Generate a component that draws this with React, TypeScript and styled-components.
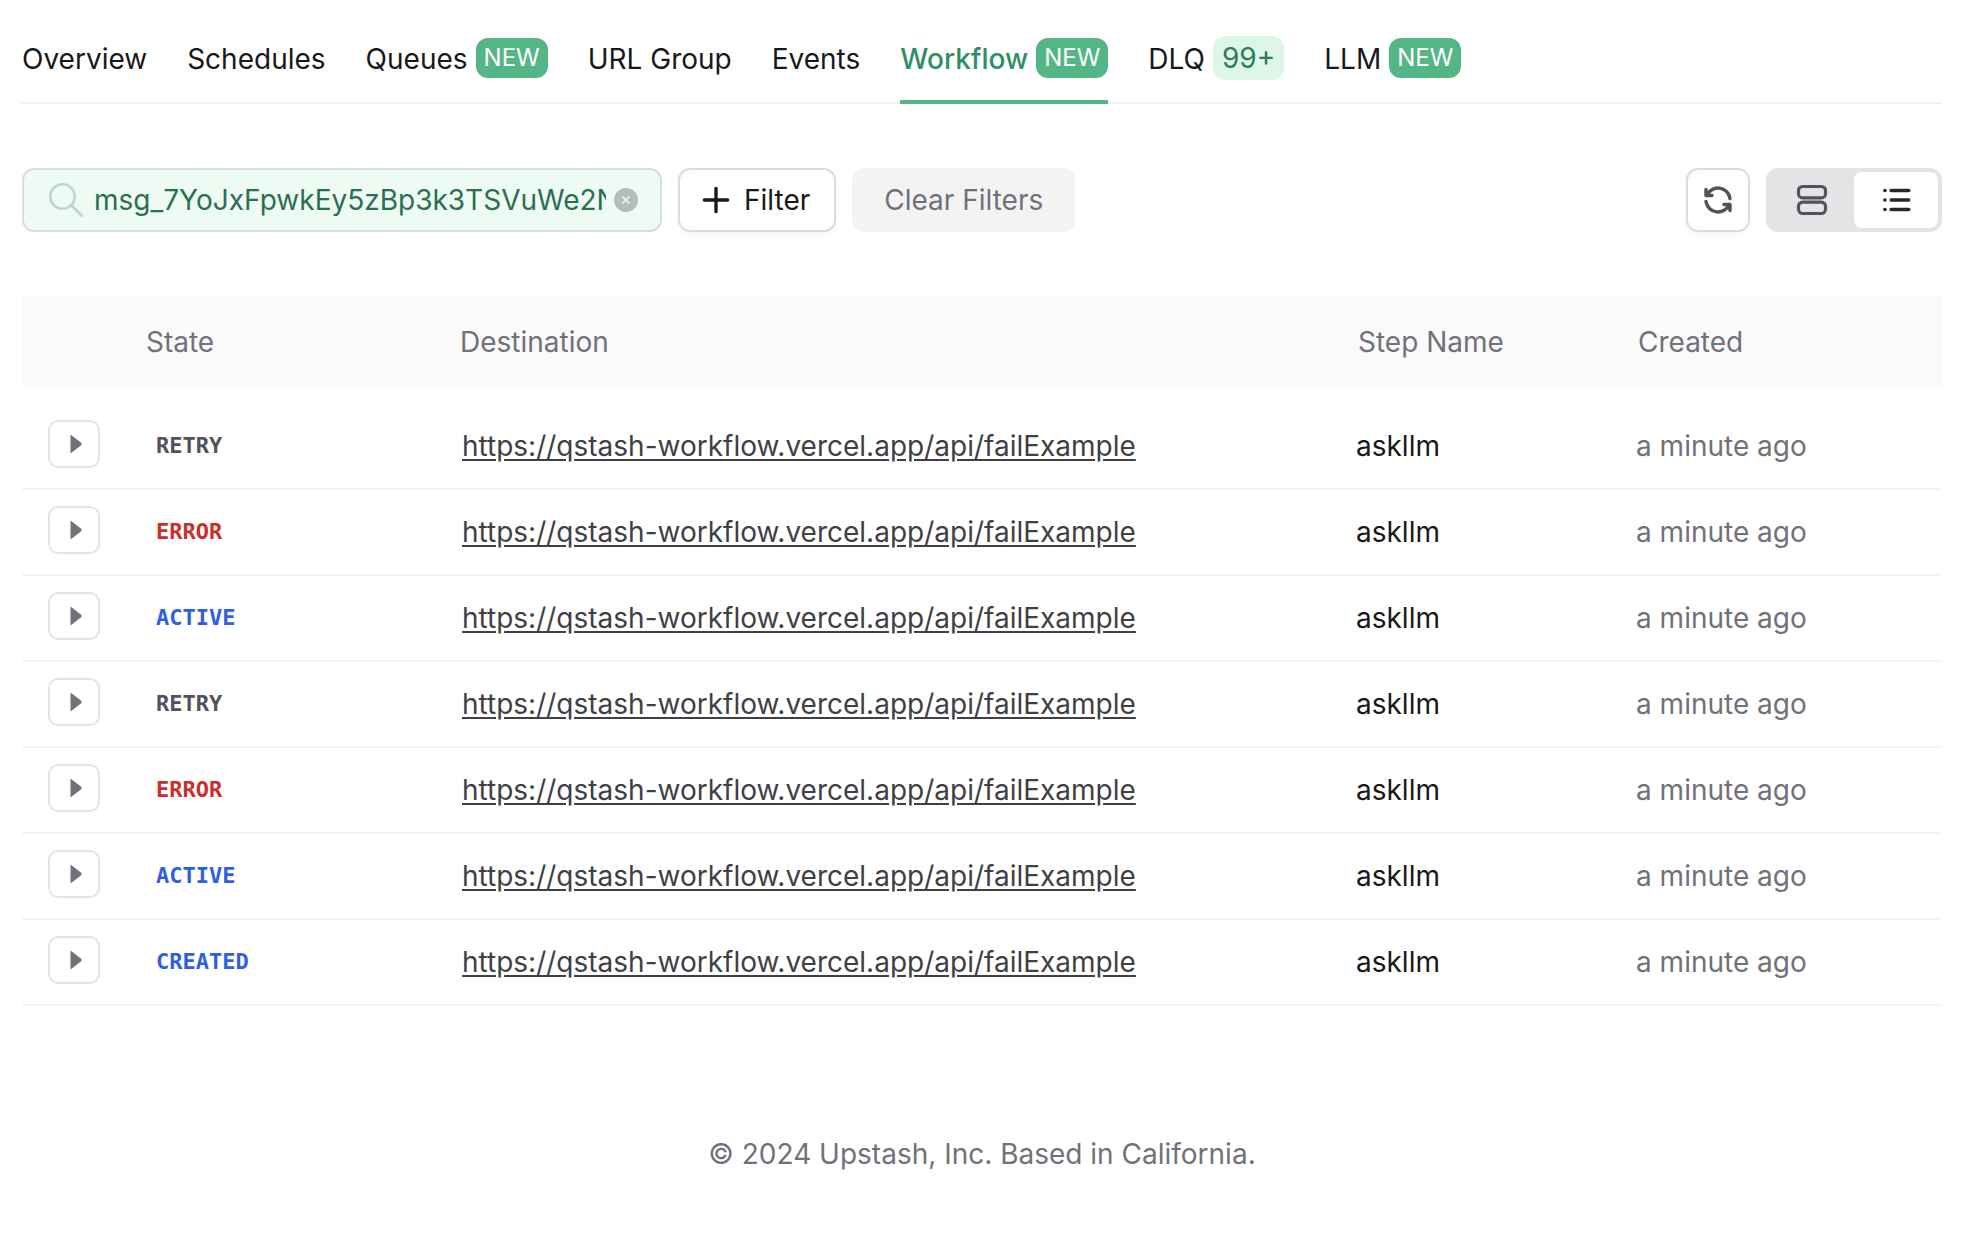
import React from 'react';
import styled, { createGlobalStyle } from 'styled-components';
import { TbList, TbPlus, TbRefresh, TbSearch } from 'react-icons/tb';

const GlobalStyle = createGlobalStyle`
  html, body {
    margin: 0;
    background: #fff;
    font-family: Inter, "Liberation Sans", sans-serif;
  }
  * { box-sizing: border-box; }
`;

const Page = styled.div`
  padding: 0 20px 0 22px;
  height: 1256px;
`;

const Tabs = styled.nav`
  display: flex;
  gap: 40px;
  height: 104px;
  border-bottom: 2px solid #f1f1f2;
`;

const Tab = styled.div<{ $active?: boolean }>`
  display: flex;
  align-items: center;
  gap: 8px;
  height: 104px;
  padding-top: 17px;
  font-size: 28px;
  line-height: 40px;
  color: ${p => (p.$active ? '#2f8f64' : '#18181b')};
  font-weight: ${p => (p.$active ? 500 : 400)};
  border-bottom: 4px solid ${p => (p.$active ? '#54b685' : 'transparent')};
`;

const Badge = styled.span<{ $light?: boolean }>`
  display: inline-flex;
  align-items: center;
  justify-content: center;
  padding: 0 ${p => (p.$light ? 9 : 8)}px;
  height: ${p => (p.$light ? 44 : 40)}px;
  margin-top: -1px;
  border-radius: 12px;
  font-size: ${p => (p.$light ? 28 : 24)}px;
  font-weight: 400;
  color: ${p => (p.$light ? '#2f7a58' : '#fff')};
  background: ${p => (p.$light ? '#dcf7e8' : '#54b685')};
`;

const Toolbar = styled.div`
  display: flex;
  align-items: center;
  gap: 16px;
  margin-top: 64px;
  height: 64px;
`;

const SearchBox = styled.div`
  display: flex;
  align-items: center;
  width: 640px;
  height: 64px;
  padding: 0 21px 0 21px;
  background: #eefbf5;
  border: 2px solid #dcdcde;
  border-radius: 12px;
  color: #b8d8ca;
  font-size: 42px;
`;

const SearchValue = styled.div`
  margin-left: 7px;
  width: 512px;
  flex: none;
  overflow: hidden;
  white-space: nowrap;
  font-size: 28px;
  color: #2a7050;
`;

const ClearIcon = styled.svg`
  width: 24px;
  height: 24px;
  margin-left: 8px;
  flex: none;
`;

const OutlineButton = styled.button`
  display: flex;
  align-items: center;
  justify-content: center;
  gap: 8px;
  height: 64px;
  padding: 0 24px 0 16px;
  background: #fff;
  border: 2px solid #dcdcde;
  border-radius: 12px;
  box-shadow: 0 4px 6px rgba(0, 0, 0, 0.03);
  font: inherit;
  font-size: 28px;
  color: #18181b;
`;

const ClearButton = styled.button`
  height: 64px;
  width: 223px;
  border: 0;
  border-radius: 12px;
  background: #f3f3f4;
  font: inherit;
  font-size: 28px;
  color: #71717a;
`;

const Spacer = styled.div`
  flex: 1;
`;

const IconButton = styled(OutlineButton)`
  width: 64px;
  padding: 0;
  color: #52525b;
  font-size: 36px;
`;

const Toggle = styled.div`
  display: flex;
  width: 176px;
  height: 64px;
  padding: 4px;
  background: #e4e4e7;
  border-radius: 12px;
`;

const ToggleItem = styled.div<{ $on?: boolean }>`
  flex: 1;
  display: flex;
  align-items: center;
  justify-content: center;
  border-radius: 8px;
  font-size: 38px;
  background: ${p => (p.$on ? '#fff' : 'transparent')};
  color: ${p => (p.$on ? '#27272a' : '#52525b')};
`;

const TableHead = styled.div`
  display: grid;
  grid-template-columns: 124px 314px 898px 280px 1fr;
  align-items: center;
  margin-top: 64px;
  height: 92px;
  background: #fafafa;
  font-size: 28px;
  color: #71717a;
`;

const Rows = styled.div`
  margin-top: 16px;
`;

const Row = styled.div`
  display: grid;
  grid-template-columns: 134px 306px 894px 280px 1fr;
  align-items: center;
  height: 86px;
  border-bottom: 2px solid #f4f4f5;
  font-size: 28px;
`;

const Expand = styled.div`
  display: flex;
  align-items: center;
  justify-content: center;
  width: 52px;
  height: 48px;
  margin: 0 0 5px 26px;
  padding-left: 3px;
  border: 2px solid #e4e4e7;
  border-radius: 10px;
  color: #71717a;
`;

const stateColors: Record<string, string> = {
  RETRY: '#52525b',
  ERROR: '#c9302c',
  ACTIVE: '#2f5fe0',
  CREATED: '#2f5fe0',
};

const State = styled.span<{ $state: string }>`
  font-family: "DejaVu Sans Mono", "Liberation Mono", monospace;
  font-weight: 700;
  font-size: 22px;
  margin-top: -1px;
  color: ${p => stateColors[p.$state]};
`;

const Destination = styled.a`
  color: #3f3f46;
  text-decoration: underline;
  text-underline-offset: 3px;
`;

const Step = styled.span`
  color: #18181b;
`;

const Created = styled.span`
  color: #71717a;
`;

const Footer = styled.footer`
  margin-top: 128px;
  text-align: center;
  font-size: 28px;
  line-height: 40px;
  color: #71717a;
`;

const rows = ['RETRY', 'ERROR', 'ACTIVE', 'RETRY', 'ERROR', 'ACTIVE', 'CREATED'];
const url = 'https://qstash-workflow.vercel.app/api/failExample';

export default function App(): React.ReactElement {
  return (
    <Page>
      <GlobalStyle />
      <Tabs>
        <Tab>Overview</Tab>
        <Tab>Schedules</Tab>
        <Tab>Queues <Badge>NEW</Badge></Tab>
        <Tab>URL Group</Tab>
        <Tab>Events</Tab>
        <Tab $active>Workflow <Badge>NEW</Badge></Tab>
        <Tab>DLQ <Badge $light>99+</Badge></Tab>
        <Tab>LLM <Badge>NEW</Badge></Tab>
      </Tabs>

      <Toolbar>
        <SearchBox>
          <TbSearch style={{ strokeWidth: 1.5, flex: 'none' }} />
          <SearchValue>msg_7YoJxFpwkEy5zBp3k3TSVuWe2NmQxLpA</SearchValue>
          <ClearIcon viewBox="0 0 24 24">
            <circle cx="12" cy="12" r="12" fill="#b2bfb9" />
            <path d="M8.5 8.5l7 7M15.5 8.5l-7 7" stroke="#eefbf5" strokeWidth="1.5" />
          </ClearIcon>
        </SearchBox>
        <OutlineButton>
          <TbPlus size={40} />
          Filter
        </OutlineButton>
        <ClearButton>Clear Filters</ClearButton>
        <Spacer />
        <IconButton><TbRefresh style={{ strokeWidth: 2.3 }} /></IconButton>
        <Toggle>
          <ToggleItem>
            <svg width="36" height="36" viewBox="0 0 24 24" fill="none" stroke="currentColor" strokeWidth="2.1">
              <rect x="3" y="3" width="18" height="7.6" rx="2.8" />
              <rect x="3" y="13.4" width="18" height="7.6" rx="2.8" />
            </svg>
          </ToggleItem>
          <ToggleItem $on><TbList style={{ strokeWidth: 2.3 }} /></ToggleItem>
        </Toggle>
      </Toolbar>

      <TableHead>
        <span />
        <span>State</span>
        <span>Destination</span>
        <span>Step Name</span>
        <span>Created</span>
      </TableHead>

      <Rows>
        {rows.map((state, i) => (
          <Row key={i}>
            <Expand>
              <svg width="12" height="20" viewBox="0 0 12 20">
                <path d="M0.5 0.5 L11.5 9 V11 L0.5 19.5 Z" fill="currentColor" />
              </svg>
            </Expand>
            <State $state={state}>{state}</State>
            <Destination>{url}</Destination>
            <Step>askllm</Step>
            <Created>a minute ago</Created>
          </Row>
        ))}
      </Rows>

      <Footer>© 2024 Upstash, Inc. Based in California.</Footer>
    </Page>
  );
}
